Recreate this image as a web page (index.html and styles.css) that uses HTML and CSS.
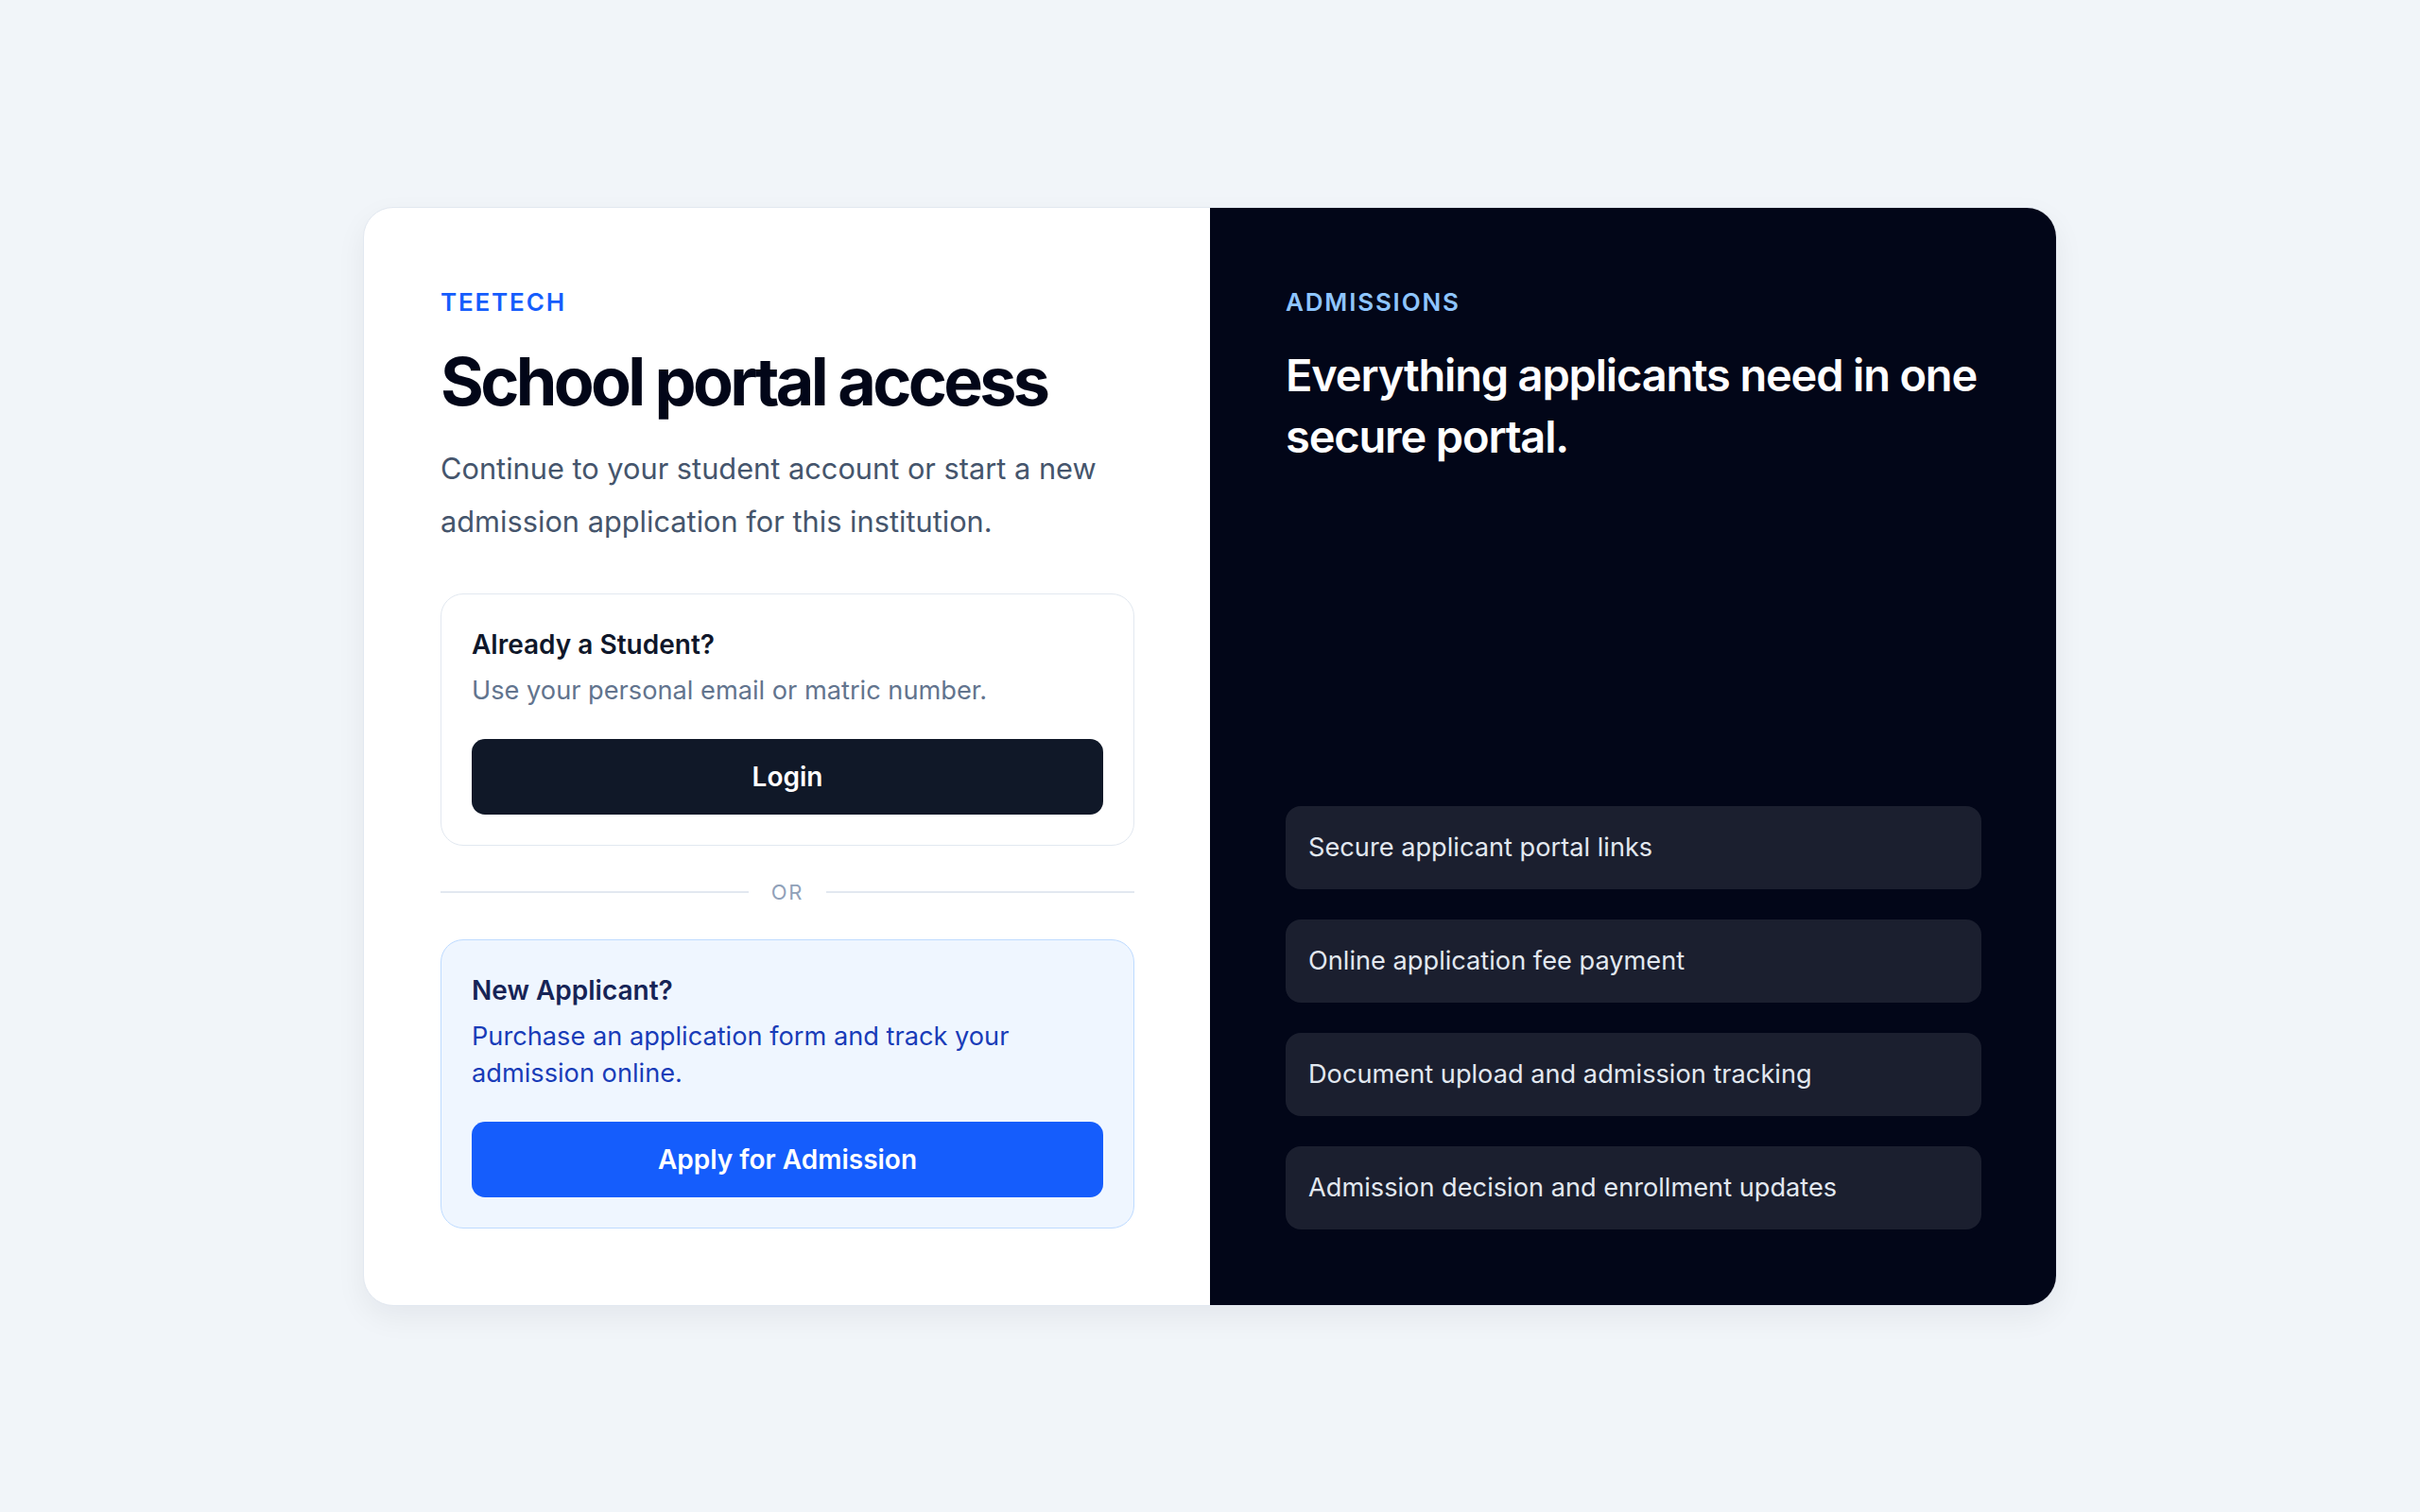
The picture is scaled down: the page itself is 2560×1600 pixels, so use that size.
FILE: index.html
```html
<!DOCTYPE html>
<html lang="en">
<head>
<meta charset="utf-8">
<title>School portal access</title>
<link rel="stylesheet" href="styles.css">
</head>
<body>
<main class="page">
  <section class="card">
    <div class="left">
      <p class="eyebrow eyebrow-blue">TEETECH</p>
      <h1 class="title">School portal access</h1>
      <p class="lead">Continue to your student account or start a new admission application for this institution.</p>

      <div class="box box-student">
        <h2 class="box-title">Already a Student?</h2>
        <p class="box-text">Use your personal email or matric number.</p>
        <button class="btn btn-dark" type="button">Login</button>
      </div>

      <div class="divider"><span class="divider-line"></span><span class="divider-text">OR</span><span class="divider-line"></span></div>

      <div class="box box-applicant">
        <h2 class="box-title box-title-blue">New Applicant?</h2>
        <p class="box-text box-text-blue">Purchase an application form and track your admission online.</p>
        <button class="btn btn-blue" type="button">Apply for Admission</button>
      </div>
    </div>

    <div class="right">
      <div class="right-top">
        <p class="eyebrow eyebrow-light">ADMISSIONS</p>
        <h2 class="right-title">Everything applicants need in one secure portal.</h2>
      </div>
      <ul class="features">
        <li class="feature">Secure applicant portal links</li>
        <li class="feature">Online application fee payment</li>
        <li class="feature">Document upload and admission tracking</li>
        <li class="feature">Admission decision and enrollment updates</li>
      </ul>
    </div>
  </section>
</main>
</body>
</html>
```

FILE: styles.css
```css
* { box-sizing: border-box; }

html, body {
  margin: 0;
  padding: 0;
}

body {
  background: #f1f5f9;
  font-family: Inter, "Noto Sans", "Liberation Sans", sans-serif;
  color: #0f172a;
}

.page {
  min-height: 100vh;
  display: flex;
  align-items: center;
  justify-content: center;
}

.card {
  width: 1792px;
  display: grid;
  grid-template-columns: 1fr 1fr;
  background: #ffffff;
  border: 1px solid #e2e8f0;
  border-radius: 32px;
  overflow: hidden;
  box-shadow: 0 12px 32px rgba(15, 23, 42, 0.06);
}

.left {
  padding: 80px 80px 81px 81px;
}

.eyebrow {
  margin: 0;
  font-size: 26px;
  line-height: 40px;
  font-weight: 600;
  letter-spacing: 0.07em;
}

.eyebrow-blue { color: #155dfc; }
.eyebrow-light { color: #8ec5ff; }

.title {
  margin: 24px 0 0;
  font-size: 70px;
  line-height: 80px;
  font-weight: 700;
  letter-spacing: -0.052em;
  color: #020618;
}

.lead {
  margin: 24px 0 0;
  font-size: 30.75px;
  line-height: 56px;
  color: #45556c;
}

.box {
  margin-top: 48px;
  padding: 32px;
  border-radius: 24px;
  border: 1px solid #e2e8f0;
  background: #ffffff;
}

.box-applicant {
  margin-top: 33px;
  background: #eff6ff;
  border-color: #bedbff;
}

.box-title {
  margin: 0;
  font-size: 28px;
  line-height: 42px;
  font-weight: 600;
  color: #0f172a;
}

.box-title-blue { color: #162456; }

.box-text {
  margin: 8px 0 0;
  font-size: 27.2px;
  line-height: 39px;
  color: #62748e;
}

.box-text-blue { color: #193cb8; }

.btn {
  display: block;
  width: 100%;
  height: 80px;
  margin-top: 32px;
  border: 0;
  border-radius: 14px;
  font-family: inherit;
  font-size: 28px;
  font-weight: 600;
  color: #ffffff;
  cursor: pointer;
}

.btn-dark { background: #101828; }
.btn-blue { background: #155dfc; }

.divider {
  margin-top: 33px;
  display: flex;
  align-items: center;
  gap: 24px;
}

.divider-line {
  flex: 1;
  height: 2px;
  background: #e2e8f0;
}

.divider-text {
  font-size: 22px;
  line-height: 33px;
  letter-spacing: 0.08em;
  color: #90a1b9;
}

.right {
  background: #020618;
  padding: 80px 79px 80px 80px;
  display: flex;
  flex-direction: column;
  justify-content: space-between;
}

.right-title {
  margin: 24px 0 0;
  font-size: 47px;
  line-height: 65px;
  font-weight: 600;
  letter-spacing: -0.025em;
  color: #ffffff;
}

.features {
  list-style: none;
  margin: 0;
  padding: 0;
  display: flex;
  flex-direction: column;
  gap: 32px;
}

.feature {
  padding: 24.5px 24px;
  border-radius: 16px;
  background: rgba(255, 255, 255, 0.1);
  font-size: 27.2px;
  line-height: 39px;
  color: #e2e8f0;
}
```
